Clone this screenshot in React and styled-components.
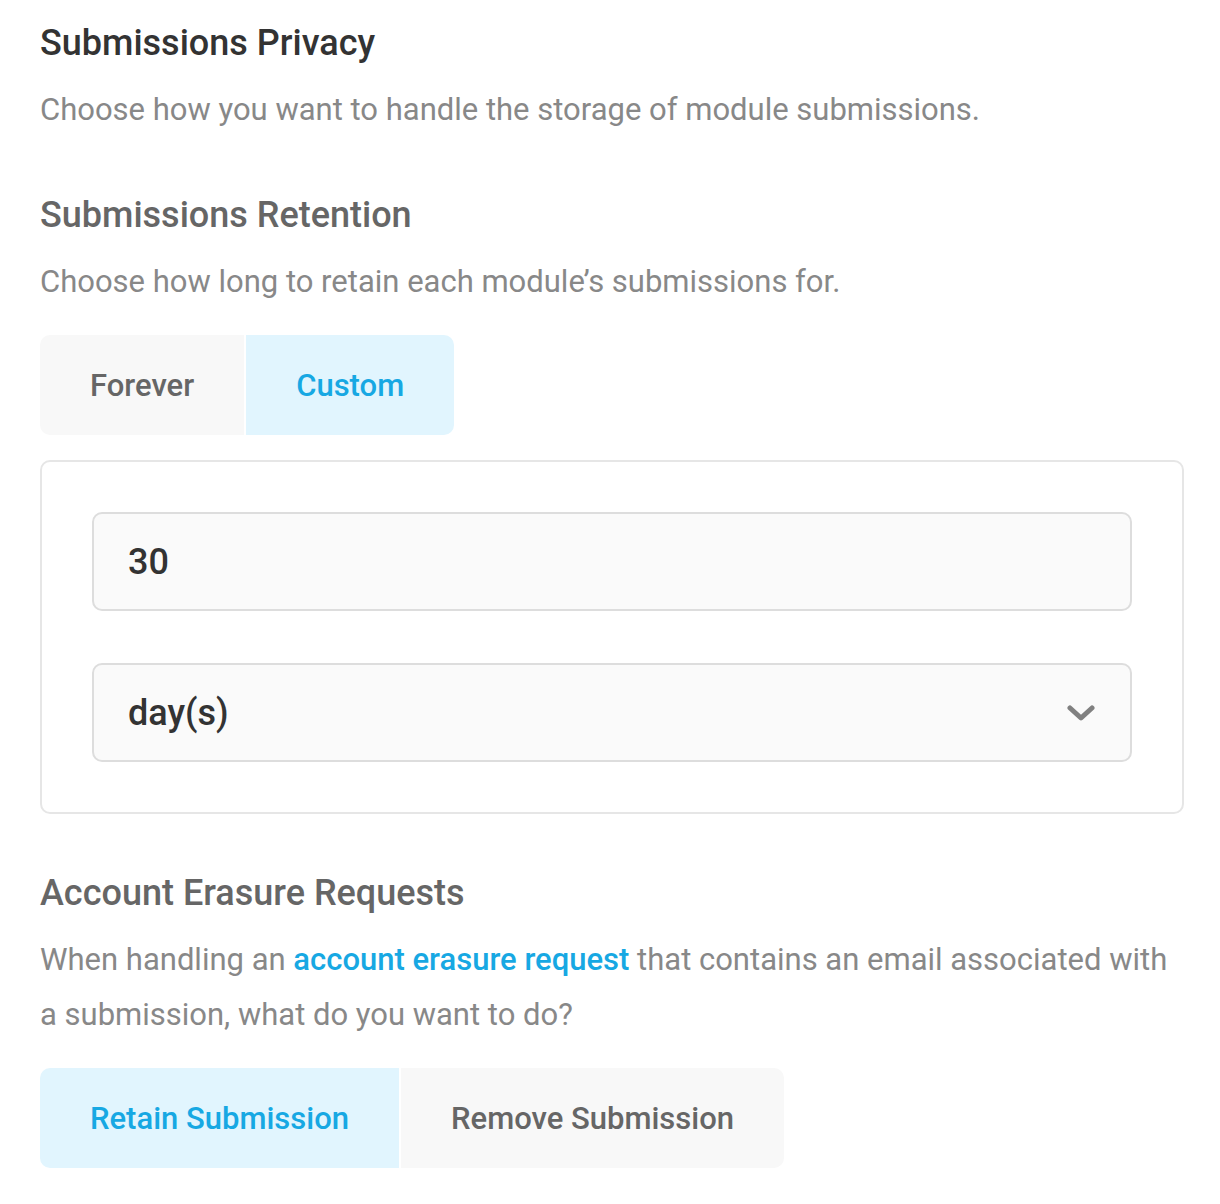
import styled, { createGlobalStyle } from "styled-components";
import { useState } from "react";

const GlobalStyle = createGlobalStyle`
  body {
    margin: 0;
    background: #fff;
    font-family: Roboto, "Liberation Sans", Arial, sans-serif;
    -webkit-font-smoothing: antialiased;
  }
`;

const Chevron = () => (
  <svg width="28" height="16" viewBox="0 0 28 16" fill="none">
    <polyline
      points="3,3 14,13 25,3"
      stroke="#808080"
      strokeWidth="5"
      strokeLinecap="round"
      strokeLinejoin="round"
    />
  </svg>
);

const App = () => {
  const [retention, setRetention] = useState("custom");
  const [erasure, setErasure] = useState("retain");
  const [amount, setAmount] = useState("30");
  const [unit, setUnit] = useState("days");

  return (
    <Page>
      <GlobalStyle />
      <Section>
        <Title dark>Submissions Privacy</Title>
        <Description>
          Choose how you want to handle the storage of module submissions.
        </Description>
      </Section>

      <Section>
        <Title>Submissions Retention</Title>
        <Description>Choose how long to retain each module’s submissions for.</Description>
        <Tabs>
          <Tab active={retention === "forever"} onClick={() => setRetention("forever")}>
            Forever
          </Tab>
          <Tab active={retention === "custom"} onClick={() => setRetention("custom")}>
            Custom
          </Tab>
        </Tabs>
        <Panel>
          <Field
            type="text"
            value={amount}
            onChange={(e) => setAmount(e.target.value)}
          />
          <SelectWrap>
            <Select value={unit} onChange={(e) => setUnit(e.target.value)}>
              <option value="days">day(s)</option>
              <option value="weeks">week(s)</option>
              <option value="months">month(s)</option>
              <option value="years">year(s)</option>
            </Select>
            <SelectIcon>
              <Chevron />
            </SelectIcon>
          </SelectWrap>
        </Panel>
      </Section>

      <Section>
        <Title>Account Erasure Requests</Title>
        <Description>
          When handling an <Link href="#">account erasure request</Link> that
          contains an email associated with a submission, what do you want to do?
        </Description>
        <Tabs>
          <Tab active={erasure === "retain"} onClick={() => setErasure("retain")}>
            Retain Submission
          </Tab>
          <Tab active={erasure === "remove"} onClick={() => setErasure("remove")}>
            Remove Submission
          </Tab>
        </Tabs>
      </Section>
    </Page>
  );
};

const Page = styled.div`
  padding: 21px 36px 40px 40px;
  display: flex;
  flex-direction: column;
  gap: 56px;
`;

const Section = styled.section`
  display: flex;
  flex-direction: column;

  & + & + & {
    margin-top: 1px;
  }
`;

const Title = styled.h2`
  margin: 0 0 17px;
  font-size: 36px;
  line-height: 44px;
  font-weight: 500;
  color: ${(props) => (props.dark ? "#333" : "#666")};
`;

const Description = styled.p`
  margin: 0;
  font-size: 31px;
  line-height: 55px;
  color: #888;
`;

const Link = styled.a`
  color: #17a8e3;
  font-weight: 500;
  text-decoration: none;
`;

const Tabs = styled.div`
  display: flex;
  align-self: flex-start;
  gap: 2px;
  margin-top: 26px;
  border-radius: 10px;
  overflow: hidden;
`;

const Tab = styled.button`
  border: none;
  height: 100px;
  padding: 0 50px;
  font-family: inherit;
  font-size: 31px;
  font-weight: 500;
  cursor: pointer;
  background: ${(props) => (props.active ? "#e1f5fe" : "#f8f8f8")};
  color: ${(props) => (props.active ? "#17a8e3" : "#666")};
`;

const Panel = styled.div`
  margin-top: 25px;
  border: 2px solid #e6e6e6;
  border-radius: 10px;
  padding: 50px;
  display: flex;
  flex-direction: column;
  gap: 52px;
`;

const inputStyles = `
  box-sizing: border-box;
  width: 100%;
  height: 99px;
  margin: 0;
  border: 2px solid #ddd;
  border-radius: 10px;
  background: #fafafa;
  padding: 0 34px;
  font-family: Roboto, "Liberation Sans", Arial, sans-serif;
  font-size: 36px;
  font-weight: 500;
  color: #333;
  outline: none;
`;

const Field = styled.input`
  ${inputStyles}
`;

const SelectWrap = styled.div`
  position: relative;
`;

const Select = styled.select`
  ${inputStyles}
  appearance: none;
  -webkit-appearance: none;
  cursor: pointer;
`;

const SelectIcon = styled.span`
  position: absolute;
  right: 37px;
  top: 50%;
  transform: translateY(-50%);
  display: flex;
  pointer-events: none;
`;

export default App;
